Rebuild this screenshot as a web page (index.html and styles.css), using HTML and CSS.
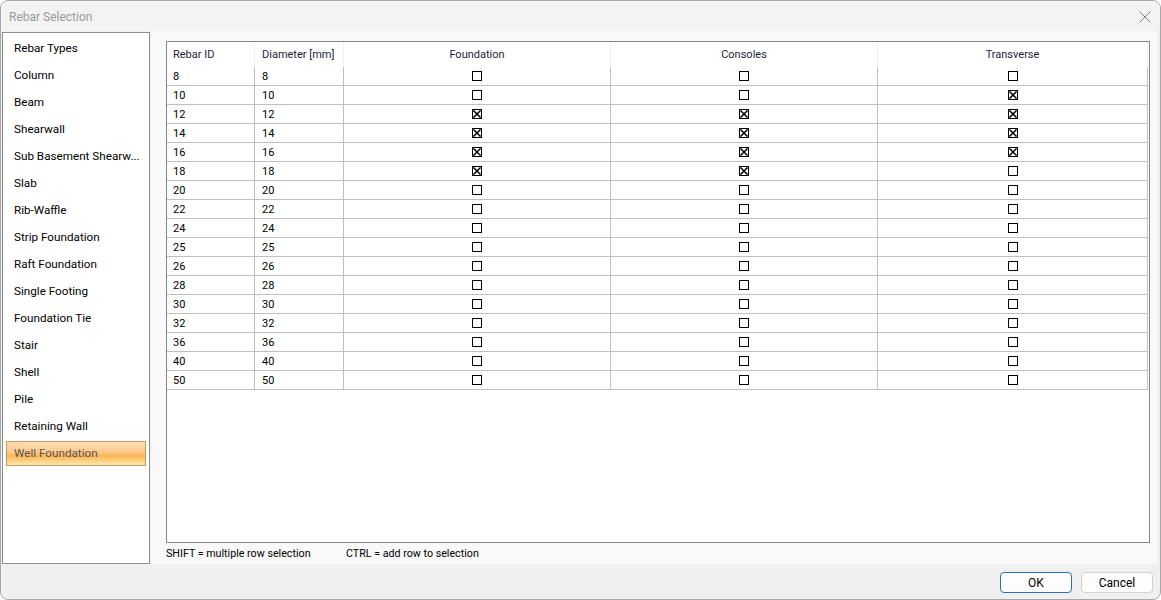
FILE: index.html
```html
<!DOCTYPE html>
<html>
<head>
    <title>Rebar Selection</title>
    <link rel="stylesheet" href="styles.css">
</head>
<body>
    <div class="dialog">
        <div class="titlebar">
            <span class="title">Rebar Selection</span>
            <svg class="close" width="12" height="12" viewBox="0 0 12 12">
                <path d="M0.5 0.5 L11.5 11.5 M11.5 0.5 L0.5 11.5" stroke="#808080" stroke-width="1" fill="none"/>
            </svg>
        </div>

        <div class="main">
            <!-- element types -->
            <div class="nav">
                <div class="nav-item">Rebar Types</div>
                <div class="nav-item">Column</div>
                <div class="nav-item">Beam</div>
                <div class="nav-item">Shearwall</div>
                <div class="nav-item">Sub Basement Shearw...</div>
                <div class="nav-item">Slab</div>
                <div class="nav-item">Rib-Waffle</div>
                <div class="nav-item">Strip Foundation</div>
                <div class="nav-item">Raft Foundation</div>
                <div class="nav-item">Single Footing</div>
                <div class="nav-item">Foundation Tie</div>
                <div class="nav-item">Stair</div>
                <div class="nav-item">Shell</div>
                <div class="nav-item">Pile</div>
                <div class="nav-item">Retaining Wall</div>
                <div class="nav-item selected">Well Foundation</div>
            </div>

            <!-- rebar grid -->
            <div class="panel">
                <div class="grid">
                    <table>
                        <thead>
                            <tr>
                                <th class="c-id">Rebar ID</th>
                                <th class="c-dia">Diameter [mm]</th>
                                <th class="c-chk">Foundation</th>
                                <th class="c-chk">Consoles</th>
                                <th class="c-last">Transverse</th>
                            </tr>
                        </thead>
                        <tbody id="rows"></tbody>
                    </table>
                </div>
                <div class="hints">
                    <span class="hint">SHIFT = multiple row selection</span>
                    <span>CTRL = add row to selection</span>
                </div>
            </div>
        </div>

        <div class="buttons">
            <button class="btn default">OK</button>
            <button class="btn">Cancel</button>
        </div>
    </div>

    <script>
        const rebars = [
            [8, 0, 0, 0], [10, 0, 0, 1], [12, 1, 1, 1], [14, 1, 1, 1],
            [16, 1, 1, 1], [18, 1, 1, 0], [20, 0, 0, 0], [22, 0, 0, 0],
            [24, 0, 0, 0], [25, 0, 0, 0], [26, 0, 0, 0], [28, 0, 0, 0],
            [30, 0, 0, 0], [32, 0, 0, 0], [36, 0, 0, 0], [40, 0, 0, 0],
            [50, 0, 0, 0]
        ];

        function checkbox(on) {
            let cross = on ? '<path d="M1.5 1.5 L8.5 8.5 M8.5 1.5 L1.5 8.5" stroke="#000" stroke-width="1.6"/>' : '';
            return `<svg width="10" height="10" viewBox="0 0 10 10"><rect x="0.5" y="0.5" width="9" height="9" fill="#fff" stroke="#000" stroke-width="1"/>${cross}</svg>`;
        }

        let html = '';
        rebars.forEach(r => {
            html += `
                <tr>
                    <td>${r[0]}</td>
                    <td>${r[0]}</td>
                    <td class="chk">${checkbox(r[1])}</td>
                    <td class="chk">${checkbox(r[2])}</td>
                    <td class="chk">${checkbox(r[3])}</td>
                </tr>
            `;
        });
        document.getElementById('rows').innerHTML = html;
    </script>
</body>
</html>
```

FILE: styles.css
```css
body {
    margin: 0;
    font-family: Roboto, "Liberation Sans", sans-serif;
    font-size: 11px;
    color: #000;
    background: #fff;
}

.dialog {
    width: 1161px;
    height: 600px;
    box-sizing: border-box;
    border: 1px solid #a8a8a8;
    border-radius: 8px;
    background: #f0f0f0;
    overflow: hidden;
    display: flex;
    flex-direction: column;
}

.titlebar {
    height: 30px;
    flex: none;
    display: flex;
    align-items: center;
    justify-content: space-between;
    padding: 0 9px 0 8px;
    background: #f3f3f3;
}

.title {
    font-size: 12px;
    color: #9a9a9a;
    margin-top: 1px;
}

.close {
    margin-top: 1px;
}

.main {
    height: 533px;
    flex: none;
    display: flex;
}

.nav {
    width: 148px;
    box-sizing: border-box;
    margin-left: 1px;
    margin-top: 1px;
    border: 1px solid #8c8c8c;
    background: #fff;
    padding: 3px 3px 0 3px;
    font-size: 11.7px;
}

.nav-item {
    height: 25px;
    line-height: 25px;
    margin-bottom: 2px;
    padding-left: 8px;
    box-sizing: border-box;
    white-space: nowrap;
    color: #000;
}

.nav-item.selected {
    border: 1px solid #c39d63;
    line-height: 23px;
    padding-left: 7px;
    color: #555;
    background: linear-gradient(to bottom, #fedcb0 0%, #fdc98a 45%, #fbb555 60%, #fdd58a 85%, #fee6b4 100%);
}

.panel {
    flex: 1;
    margin-left: 1px;
    margin-right: 1px;
    background: #f9f9f9;
    border-right: 1px solid #ececec;
    padding: 10px 8px 0 15px;
    display: flex;
    flex-direction: column;
}

.grid {
    height: 502px;
    box-sizing: border-box;
    border: 1px solid #828790;
    background: #fff;
}

table {
    width: 981px;
    border-collapse: collapse;
    table-layout: fixed;
}

th {
    height: 25px;
    padding: 0;
    font-weight: normal;
    color: #1e1e3c;
    border-right: 1px solid #f0f0f0;
    text-align: center;
}

th.c-id {
    width: 80px;
    text-align: left;
    padding-left: 6px;
    padding-right: 1px;
}

th.c-dia {
    width: 81px;
    text-align: left;
    padding-left: 7px;
}

th.c-chk {
    width: 266px;
}

th.c-last {
    width: 269px;
}

td {
    height: 17px;
    padding: 1px 0 0 6px;
    border-right: 1px solid #c0c0c0;
    border-bottom: 1px solid #c0c0c0;
    line-height: 17px;
}

td + td {
    padding-left: 7px;
}

td.chk {
    padding: 0;
    height: 18px;
    text-align: center;
}

td.chk svg {
    display: inline-block;
    vertical-align: middle;
    margin-top: -1px;
}

.hints {
    height: 20px;
    line-height: 20px;
    font-size: 10.7px;
    display: flex;
    padding-top: 1px;
}

.hint {
    width: 180px;
}

.buttons {
    flex: 1;
    display: flex;
    justify-content: flex-end;
    align-items: flex-start;
    gap: 9px;
    padding: 8px 7px 0 0;
}

.btn {
    width: 72px;
    height: 21px;
    box-sizing: border-box;
    border: 1px solid #d0d0d0;
    border-radius: 4px;
    background: #fdfdfd;
    font-family: Roboto, "Liberation Sans", sans-serif;
    font-size: 12px;
    color: #000;
    padding: 0;
}

.btn.default {
    border-color: #2a6fc4;
}
```
